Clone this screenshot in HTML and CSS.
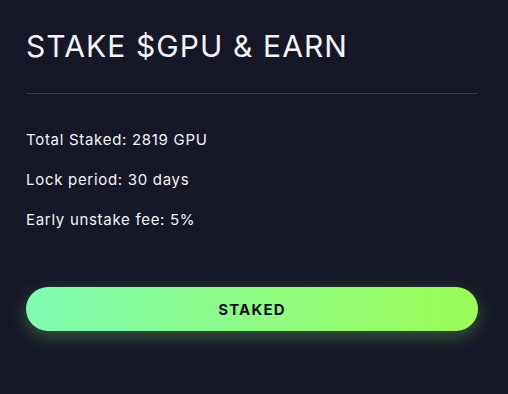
FILE: index.html
```html
<!DOCTYPE html>
<html lang="en">
<head>
  <meta charset="UTF-8">
  <meta name="viewport" content="width=device-width, initial-scale=1.0">
  <title>Stake $GPU</title>
  <link rel="stylesheet" href="styles.css">
</head>
<body>
  <div class="card">
    <h1 class="title">STAKE $GPU &amp; EARN</h1>
    <hr class="divider">
    <div class="stats">
      <p>Total Staked: 2819 GPU</p>
      <p>Lock period: 30 days</p>
      <p>Early unstake fee: 5%</p>
    </div>
    <button class="stakebtn" type="button">STAKED</button>
  </div>
</body>
</html>
```

FILE: styles.css
```css
html, body {
  margin: 0;
  padding: 0;
  height: 100%;
}
body {
  font-family: Inter, 'Noto Sans', Arial, sans-serif;
  background-color: #161827;
  color: #f4f4f6;
}
.card {
  padding: 26px 30px 0 26px;
}
.title {
  margin: 0;
  font-size: 30px;
  font-weight: 400;
  line-height: 40px;
  letter-spacing: 1.1px;
}
.divider {
  border: 0;
  border-top: 1px solid #383a48;
  margin: 27px 0 0 0;
}
.stats {
  padding-top: 36px;
}
.stats p {
  margin: 0 0 20px 0;
  font-size: 15px;
  line-height: 20px;
  letter-spacing: 0.7px;
}
.stakebtn {
  display: block;
  width: 100%;
  height: 44px;
  margin-top: 57px;
  border: 0;
  border-radius: 22px;
  background: linear-gradient(90deg, #80fcb2 0%, #8ffc86 50%, #9cfd57 100%);
  box-shadow: 0 6px 18px rgba(140, 252, 110, 0.28);
  color: #121420;
  font-family: Inter, 'Noto Sans', Arial, sans-serif;
  font-size: 15px;
  font-weight: 700;
  letter-spacing: 1.2px;
}
```
